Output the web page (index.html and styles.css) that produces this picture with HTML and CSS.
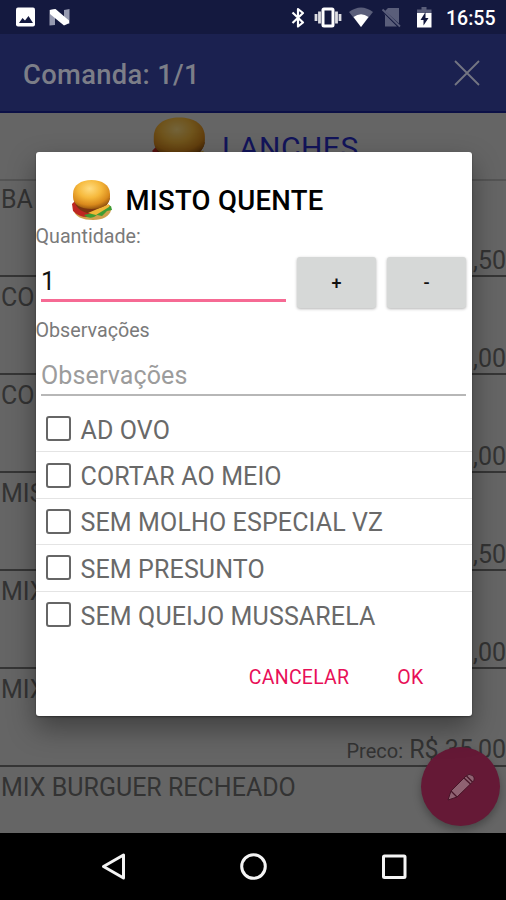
FILE: index.html
```html
<!DOCTYPE html>
<html lang="pt-BR">
<head>
<meta charset="utf-8">
<title>Comanda</title>
<link rel="stylesheet" href="styles.css">
</head>
<body>
<svg class="defs" width="0" height="0">
  <defs>
    <radialGradient id="bun" cx="45%" cy="30%" r="70%">
      <stop offset="0" stop-color="#ffdc80"/><stop offset=".45" stop-color="#f6b93c"/><stop offset=".8" stop-color="#d98a1c"/><stop offset="1" stop-color="#9a5910"/>
    </radialGradient>
    <symbol id="burger" viewBox="0 0 42 42">
      <path d="M2 29 C3 38 12 41 22 41 C32 41 39 37 40 31 L39 26 L3 25Z" fill="#cfa04a"/>
      <path d="M1 25 L2 32 Q8 38 16 38 L22 32 L4 22Z" fill="#bd2520"/>
      <path d="M13 36 Q17 40 23 38 L26 36 L31 37 L36 32 L41 31 L40 27 L30 29 L22 34Z" fill="#3f9c33"/>
      <path d="M3 18 Q3 32 20 35 Q35 33 39 19Z" fill="#7b3510"/>
      <path d="M17 34 L25 36 L38 28 L38 25Z" fill="#f0b737"/>
      <path d="M2 15 C2 6 10 1 20.500 1 C31 1 39 6 39 15 L39 18 C39 26 31 30 20.500 30 C10 30 2 26 2 18Z" fill="url(#bun)"/>
    </symbol>
  </defs>
</svg>
<div class="screen">
  <header class="status">
    <svg class="s-left" width="56" height="22" viewBox="0 0 56 22">
      <rect x="0" y="1.500" width="19" height="19" rx="2" fill="#fff"/>
      <path d="M3 17 L6.500 12 L9 14.500 L12.500 10 L17 17Z" fill="#14193f"/>
      <path d="M33.500 4 L39 3 V19 L33.500 19.500Z M48 4 L53.500 3 V17.500 L48 19Z" fill="#969ab0"/>
      <path d="M34 4 L39.500 3 L53 14.500 V17 L48 19.500 L34 8Z" fill="#fff"/>
    </svg>
    <div class="s-right">
      <svg width="144" height="24" viewBox="290 6 144 24">
        <path d="M292.500 12.500 L303 22.500 L298 26.500 V9 L303 13 L292.500 23" fill="none" stroke="#fff" stroke-width="2.200" stroke-linejoin="round"/>
        <path d="M316 14v7M319.500 11.500v12M336.500 11.500v12M340 14v7" stroke="#dddde2" stroke-width="2.800"/>
        <rect x="323" y="9" width="10" height="17" rx="1" fill="none" stroke="#fff" stroke-width="3"/>
        <path d="M349 12 Q361 3 373 12 L361 27Z" fill="#5a5e7a"/>
        <path d="M353.500 17 Q361 11.500 368.500 17 L361 27Z" fill="#fff"/>
        <path d="M388 8h11v15.500L385 11Z M383.500 13 L397 26.500H385V15Z" fill="#5a5e7a"/>
        <path d="M382.500 9.500 L400 26.500" stroke="#5a5e7a" stroke-width="1.800"/>
        <path d="M421.500 7h5v3h-5z M417 9.500h14.500v4H417z" fill="#5a5e7a"/>
        <path d="M417 13h14.500v14.500H417z" fill="#fff"/>
        <path d="M425.500 12 L420.500 20h3v5.500L428.500 18h-3z" fill="#14193f"/>
      </svg>
      <span class="clock">16:55</span>
    </div>
  </header>
  <div class="appbar">
    <h1>Comanda: 1/1</h1>
    <svg width="26" height="26" viewBox="0 0 26 26"><path d="M1 1L25 25M25 1L1 25" stroke="#747682" stroke-width="1.800"/></svg>
  </div>
  <main class="content">
    <div class="category">
      <svg class="cat-icon" width="58" height="58"><use href="#burger"/></svg>
      <span>LANCHES</span>
    </div>
    <ul class="products">
      <li><span class="name">BA</span><span class="price">,50</span></li>
      <li><span class="name">CO</span><span class="price">,00</span></li>
      <li><span class="name">CO</span><span class="price">,00</span></li>
      <li><span class="name">MIS</span><span class="price">,50</span></li>
      <li><span class="name">MIX</span><span class="price">,00</span></li>
      <li><span class="name">MIX</span><span class="price"><small>Preco:</small> R$ 35,00</span></li>
      <li><span class="name">MIX BURGUER RECHEADO</span></li>
    </ul>
    <div class="fab">
      <svg width="28" height="28" viewBox="0 0 28 28">
        <path d="M1 27 L4 18 L19 3 Q22 0 25.500 2.500 Q29 6 25.500 9 L10 24Z" fill="#8f6272" stroke="#471528" stroke-width="1"/>
        <path d="M4 18 L10 24 M17 5 L23.500 11 M19.500 3 L25.500 9" stroke="#471528" stroke-width="1.300"/>
      </svg>
    </div>
  </main>
  <nav class="nav">
    <svg width="506" height="67" viewBox="0 0 506 67" fill="none" stroke="#f4f4f4" stroke-width="3">
      <path d="M103.500 33.500 L123.500 22 V45Z" stroke-linejoin="round"/>
      <circle cx="253.500" cy="33.500" r="11.800"/>
      <rect x="383.500" y="23" width="21.500" height="21.500" rx="1"/>
    </svg>
  </nav>
  <section class="dialog">
    <div class="d-title"><svg width="42" height="42"><use href="#burger"/></svg><h2>MISTO QUENTE</h2></div>
    <div class="label">Quantidade:</div>
    <div class="qty">
      <div class="input active">1</div>
      <div class="step">+</div>
      <div class="step">-</div>
    </div>
    <div class="label obs">Observações</div>
    <div class="input hint">Observações</div>
    <ul class="options">
      <li><i class="box"></i><span>AD OVO</span></li>
      <li><i class="box"></i><span>CORTAR AO MEIO</span></li>
      <li><i class="box"></i><span>SEM MOLHO ESPECIAL VZ</span></li>
      <li><i class="box"></i><span>SEM PRESUNTO</span></li>
      <li><i class="box"></i><span>SEM QUEIJO MUSSARELA</span></li>
    </ul>
    <div class="actions"><span>CANCELAR</span><span>OK</span></div>
  </section>
</div>
</body>
</html>
```

FILE: styles.css
```css
* { box-sizing: border-box; margin: 0; padding: 0; }
body { width: 506px; height: 900px; overflow: hidden; font-family: Roboto, "Liberation Sans", sans-serif; }
ul { list-style: none; }
svg { display: block; flex: none; }
.defs { position: absolute; }
.screen { position: relative; display: flex; flex-direction: column; width: 506px; height: 900px; overflow: hidden; background: #656565; }
.status { display: flex; justify-content: space-between; height: 34px; padding: 6px 10px 0 16px; background: #14193f; }
.s-right { display: flex; }
.clock { width: 50px; margin-left: 12px; font-size: 19.5px; font-weight: 500; line-height: 25px; color: #fff; white-space: nowrap; }
.appbar { display: flex; align-items: center; justify-content: space-between; height: 79px; padding: 0 26px 0 23px; background: #1b2150; border-bottom: 2px solid #0c1046; }
.appbar h1 { font-size: 27.3px; font-weight: 500; line-height: 32px; letter-spacing: .35px; color: #7c7e88; padding-top: 4px; white-space: nowrap; }
.content { position: relative; height: 720px; overflow: hidden; }
.category { display: flex; height: 68px; padding-left: 151px; border-bottom: 2px solid #545454; color: #12145a; font-size: 30px; line-height: 34px; letter-spacing: .5px; }
.category span { padding: 18px 0 0 13px; }
.cat-icon { margin-top: 3px; filter: brightness(.45); }
.products li { display: flex; flex-direction: column; justify-content: space-between; height: 98px; padding: 5px 0 0 1px; border-bottom: 2px solid #353535; font-size: 25px; line-height: 32px; color: #333; white-space: nowrap; }
.products li:first-child { height: 96px; padding-top: 3px; }
.price { align-self: flex-end; line-height: 28px; }
.price small { font-size: 20px; }
.fab { position: absolute; left: 421px; top: 634px; display: flex; align-items: center; justify-content: center; width: 79px; height: 79px; border-radius: 50%; background: #651936; box-shadow: 0 4px 8px rgba(0,0,0,.3); }
.nav { height: 67px; background: #000; }
.dialog { position: absolute; left: 35.5px; top: 151.5px; width: 436px; height: 564px; display: flex; flex-direction: column; border-radius: 3px; background: #fff; box-shadow: 0 12px 28px rgba(0,0,0,.38), 0 1px 2px rgba(0,0,0,.4); }
.d-title { display: flex; height: 72px; padding: 27px 0 0 35px; gap: 13px; }
.d-title h2 { font-size: 27.5px; font-weight: 500; line-height: 43px; letter-spacing: .3px; color: #000; white-space: nowrap; }
.label { height: 25px; font-size: 19.7px; line-height: 25px; color: #7a7a7a; white-space: nowrap; }
.qty { display: flex; height: 68px; padding-left: 5.5px; align-items: flex-start; }
.input { font-size: 25px; }
.input.active { width: 245px; height: 53px; padding-top: 17px; line-height: 32px; color: #111; border-bottom: 3px solid #f66a94; margin-right: 11px; }
.step { width: 79px; height: 51px; margin: 8px 11px 0 0; border-radius: 3px; background: #d6d8d7; font-size: 18px; font-weight: 500; line-height: 51px; text-align: center; color: #111; box-shadow: 0 1px 3px rgba(0,0,0,.3); }
.step:last-child { margin-right: 0; }
.obs { margin-top: 1px; }
.hint { width: 425px; height: 53px; margin-left: 5.5px; padding-top: 17px; line-height: 32px; letter-spacing: .12px; color: #9c9c9c; border-bottom: 2px solid #b7b7b7; }
.options { margin-top: 10.5px; }
.options li { display: flex; align-items: center; height: 46.4px; padding-left: 10px; gap: 10px; border-bottom: 1.5px solid #e4e4e4; font-size: 25px; letter-spacing: .13px; color: #696969; white-space: nowrap; }
.options li span { padding-top: 3px; }
.options li:last-child { border-bottom: 0; }
.box { width: 25px; height: 25px; border: 2.5px solid #666; border-radius: 3px; }
.actions { display: flex; justify-content: flex-end; gap: 48px; padding: 28px 48px 0 0; font-size: 19.5px; font-weight: 400; line-height: 24px; letter-spacing: .25px; color: #e80f58; }
```
